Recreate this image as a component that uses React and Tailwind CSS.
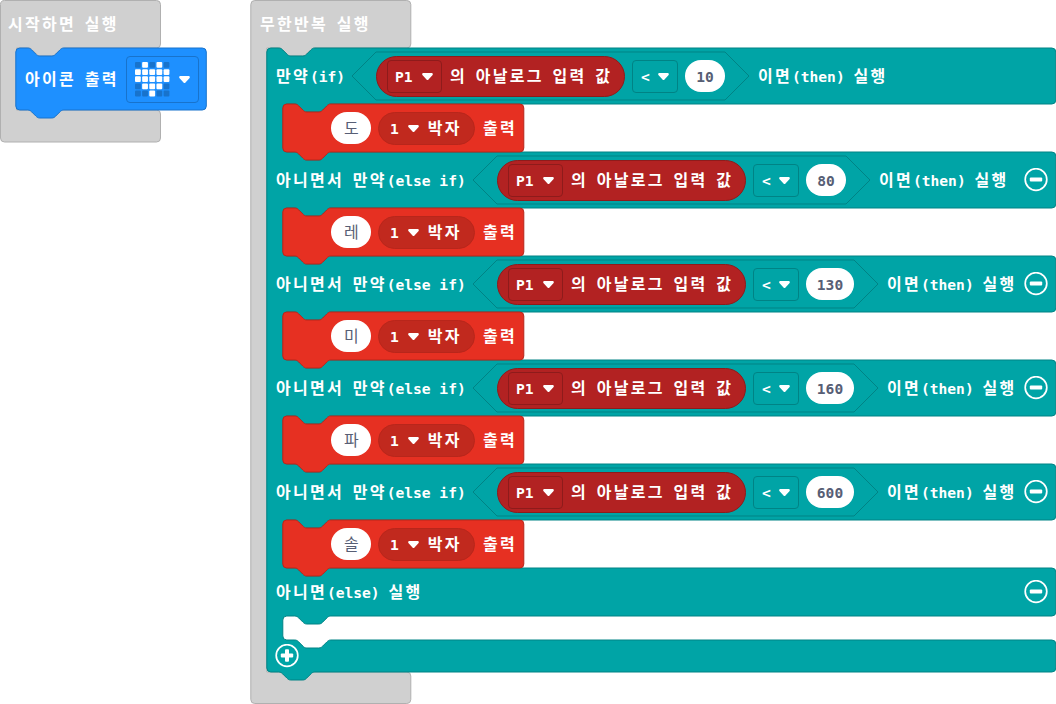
import React from "react";

const NOTCH =
  "c2 0 3 1 4 2l4 4c1 1 2 2 4 2h12c2 0 3 -1 4 -2l4 -4c1 -1 2 -2 4 -2";
const NOTCH_BACK =
  "c-2 0 -3 1 -4 2l-4 4c-1 1 -2 2 -4 2h-12c-2 0 -3 -1 -4 -2l-4 -4c-1 -1 -2 -2 -4 -2";

// Outline of a stackable statement block with a notch on top and a tab below.
function statementPath(w, h) {
  return `M0 4a4 4 0 0 1 4 -4h8${NOTCH}H${w - 4}a4 4 0 0 1 4 4V${h - 4}a4 4 0 0 1 -4 4H48${NOTCH_BACK}H4a4 4 0 0 1 -4 -4z`;
}

// Outline of an event block that wraps the statements below its header.
function eventPath(bottom, h) {
  return `M0 4.5a4 4 0 0 1 4 -4H156a4 4 0 0 1 4 4V44a4 4 0 0 1 -4 4H64${NOTCH_BACK}H16V${bottom}H156a4 4 0 0 1 4 4V${h - 4}a4 4 0 0 1 -4 4H4a4 4 0 0 1 -4 -4z`;
}

// Outline of the if / else-if / else block; slots are measured from its top.
function conditionalPath() {
  let d = `M0 4a4 4 0 0 1 4 -4h8${NOTCH}H785a4 4 0 0 1 4 4`;
  const slots = [
    [56, 104],
    [160, 208],
    [264, 312],
    [368, 416],
    [472, 520],
    [568, 592],
  ];
  slots.forEach(([top, bottom]) => {
    d += `V${top - 4}a4 4 0 0 1 -4 4H64${NOTCH_BACK}H20a4 4 0 0 0 -4 4V${bottom - 4}a4 4 0 0 0 4 4h8${NOTCH}H785a4 4 0 0 1 4 4`;
  });
  return `${d}V620a4 4 0 0 1 -4 4H48${NOTCH_BACK}H4a4 4 0 0 1 -4 -4z`;
}

function Shape({ d, className, dx = 0.8 }) {
  return (
    <svg className={`absolute left-0 top-0 h-full w-full overflow-visible ${className}`}>
      <path d={d} transform={`translate(${dx} 0)`} />
    </svg>
  );
}

function Label({ children, className = "text-white font-bold" }) {
  const runs = children.match(/[가-힣]+|[^가-힣]+/g);
  return (
    <span
      className={`block h-5 shrink-0 whitespace-pre font-['DejaVu_Sans_Mono',monospace] text-[14.6px] leading-[21px] ${className}`}
    >
      {runs.map((run, i) =>
        /[가-힣]/.test(run) ? (
          <span
            key={i}
            className="font-['Noto_Sans_CJK_KR',sans-serif] text-[16px] leading-[0] tracking-[2.25px]"
          >
            {run}
          </span>
        ) : (
          <span key={i} className="leading-[0]">
            {run}
          </span>
        )
      )}
    </span>
  );
}

function Arrow() {
  return (
    <svg className="h-[7px] w-[11px] shrink-0 fill-white" viewBox="0 0 11 7">
      <path d="M1.6 0h7.8c1.3 0 1.9 1.3 1 2.2L6.5 6.4c-.6.7-1.4.7-2 0L.6 2.2C-.3 1.3.3 0 1.6 0z" />
    </svg>
  );
}

function Value({ children, wide }) {
  return (
    <div
      className={`flex h-8 shrink-0 items-center justify-center rounded-full bg-white ${wide ? "w-12" : "w-10"}`}
    >
      <Label className="font-bold text-[#575e75]">{children}</Label>
    </div>
  );
}

function AnalogRead() {
  return (
    <div className="flex h-[41px] w-[249px] shrink-0 items-center rounded-full border border-[#8e1b1b] bg-[#b22222] pl-[10px]">
      <div className="flex h-[33px] w-[55px] items-center gap-[9px] rounded-[4px] border border-[#8e1b1b] pl-[7px]">
        <Label>P1</Label>
        <Arrow />
      </div>
      <div className="pl-2">
        <Label>의 아날로그 입력 값</Label>
      </div>
    </div>
  );
}

function Comparison({ value }) {
  const wide = value.length > 2;
  const w = wide ? 405 : 397;
  return (
    <div
      className={`relative flex h-12 shrink-0 items-center pl-6 ${wide ? "w-[405px]" : "w-[397px]"}`}
    >
      <svg className="absolute left-0 top-0 h-full w-full overflow-visible fill-none stroke-[#008385]">
        <path d={`M0 24L24 0H${w - 24}L${w} 24L${w - 24} 48H24z`} />
      </svg>
      <div className="relative flex items-center">
        <AnalogRead />
        <div className="mx-[7px] flex h-[33px] w-[46px] items-center gap-2 rounded-[4px] border border-[#008385] pl-2">
          <Label>{"<"}</Label>
          <Arrow />
        </div>
        <Value wide={wide}>{value}</Value>
      </div>
    </div>
  );
}

function RoundButton({ plus }) {
  return (
    <svg className="h-6 w-6 shrink-0" viewBox="0 0.5 24 24">
      <circle cx="12" cy="12" r="10.8" className="fill-none stroke-white" strokeWidth="1.7" />
      <rect x="5.8" y="10" width="12.4" height="4" rx="1" className="fill-white" />
      {plus && <rect x="10" y="5.8" width="4" height="12.4" rx="1" className="fill-white" />}
    </svg>
  );
}

function ConditionRow({ label, value, removable }) {
  return (
    <div className="flex h-14 w-[790px] items-center pl-[10px]">
      <div className={removable ? "w-[197px] shrink-0" : "w-[76px] shrink-0"}>
        <Label>{label}</Label>
      </div>
      <Comparison value={value} />
      <div className="flex grow items-center justify-between pl-[9px] pr-2">
        <Label>이면(then) 실행</Label>
        {removable && <RoundButton />}
      </div>
    </div>
  );
}

function NoteRow({ note }) {
  return (
    <div className="relative ml-4 flex h-12 w-[242px] items-center pl-[49px]">
      <Shape d={statementPath(241, 48)} className="fill-[#e63022] stroke-[#b8261b]" />
      <div className="relative flex items-center">
        <div className="flex h-8 w-10 items-center justify-center rounded-full bg-white">
          <Label className="pl-[3px] text-[#575e75]">{note}</Label>
        </div>
        <div className="ml-[7px] flex h-[33px] w-[97px] items-center gap-[9px] rounded-full border border-[#b8261b] bg-[#c1291e] pl-[11px]">
          <Label>1</Label>
          <Arrow />
          <Label>박자</Label>
        </div>
        <div className="pl-2">
          <Label>출력</Label>
        </div>
      </div>
    </div>
  );
}

const HEART = [".#.#.", "#####", "#####", ".###.", "..#.."];

function StartStack() {
  return (
    <div className="relative h-[142px] w-[250px] shrink-0">
      <Shape dx={0.5} d={eventPath(110, 142)} className="fill-[#d0d0d0] stroke-[#b0b0b0]" />
      <div className="relative flex h-12 items-center pl-2">
        <Label>시작하면 실행</Label>
      </div>
      <div className="relative ml-[15px] flex h-[62px] w-[191px] items-center pl-[10px]">
        <Shape d={statementPath(190.5, 62)} className="fill-[#1e90ff] stroke-[#1873cc]" />
        <div className="relative flex items-center">
          <div className="w-[101px]">
            <Label>아이콘 출력</Label>
          </div>
          <div className="flex h-[47px] w-[73px] items-center gap-[8px] rounded-[4px] border border-[#1873cc] pl-2">
            <svg className="h-9 w-9 shrink-0" viewBox="0 0 36 36">
              {HEART.map((row, y) =>
                [...row].map((led, x) => (
                  <rect
                    key={`${x}-${y}`}
                    x={x * 7.15}
                    y={y * 7.15 + 1}
                    width="5.8"
                    height="5.8"
                    rx="1"
                    className={led === "#" ? "fill-white" : "fill-[#1873cc]"}
                  />
                ))
              )}
            </svg>
            <Arrow />
          </div>
        </div>
      </div>
    </div>
  );
}

const BRANCHES = [
  { value: "10", note: "도" },
  { value: "80", note: "레" },
  { value: "130", note: "미" },
  { value: "160", note: "파" },
  { value: "600", note: "솔" },
];

function ForeverStack() {
  return (
    <div className="relative h-[704px] w-[806px] shrink-0">
      <Shape d={eventPath(672, 703.5)} className="fill-[#d0d0d0] stroke-[#b0b0b0]" />
      <div className="relative flex h-12 items-center pl-[10px]">
        <Label>무한반복 실행</Label>
      </div>
      <div className="relative ml-4 h-[624px] w-[790px]">
        <Shape d={conditionalPath()} className="fill-[#00a4a6] stroke-[#008385]" />
        <div className="relative flex flex-col">
          {BRANCHES.map((b, i) => (
            <React.Fragment key={b.value}>
              <ConditionRow
                label={i ? "아니면서 만약(else if)" : "만약(if)"}
                value={b.value}
                removable={i > 0}
              />
              <NoteRow note={b.note} />
            </React.Fragment>
          ))}
          <div className="flex h-12 items-center justify-between pl-[10px] pr-2">
            <Label>아니면(else) 실행</Label>
            <RoundButton />
          </div>
          <div className="h-6" />
          <div className="flex h-8 items-center pl-[9px]">
            <RoundButton plus />
          </div>
        </div>
      </div>
    </div>
  );
}

export default function App() {
  return (
    <div className="flex h-[704px] w-[1056px] overflow-hidden bg-white">
      <StartStack />
      <ForeverStack />
    </div>
  );
}
